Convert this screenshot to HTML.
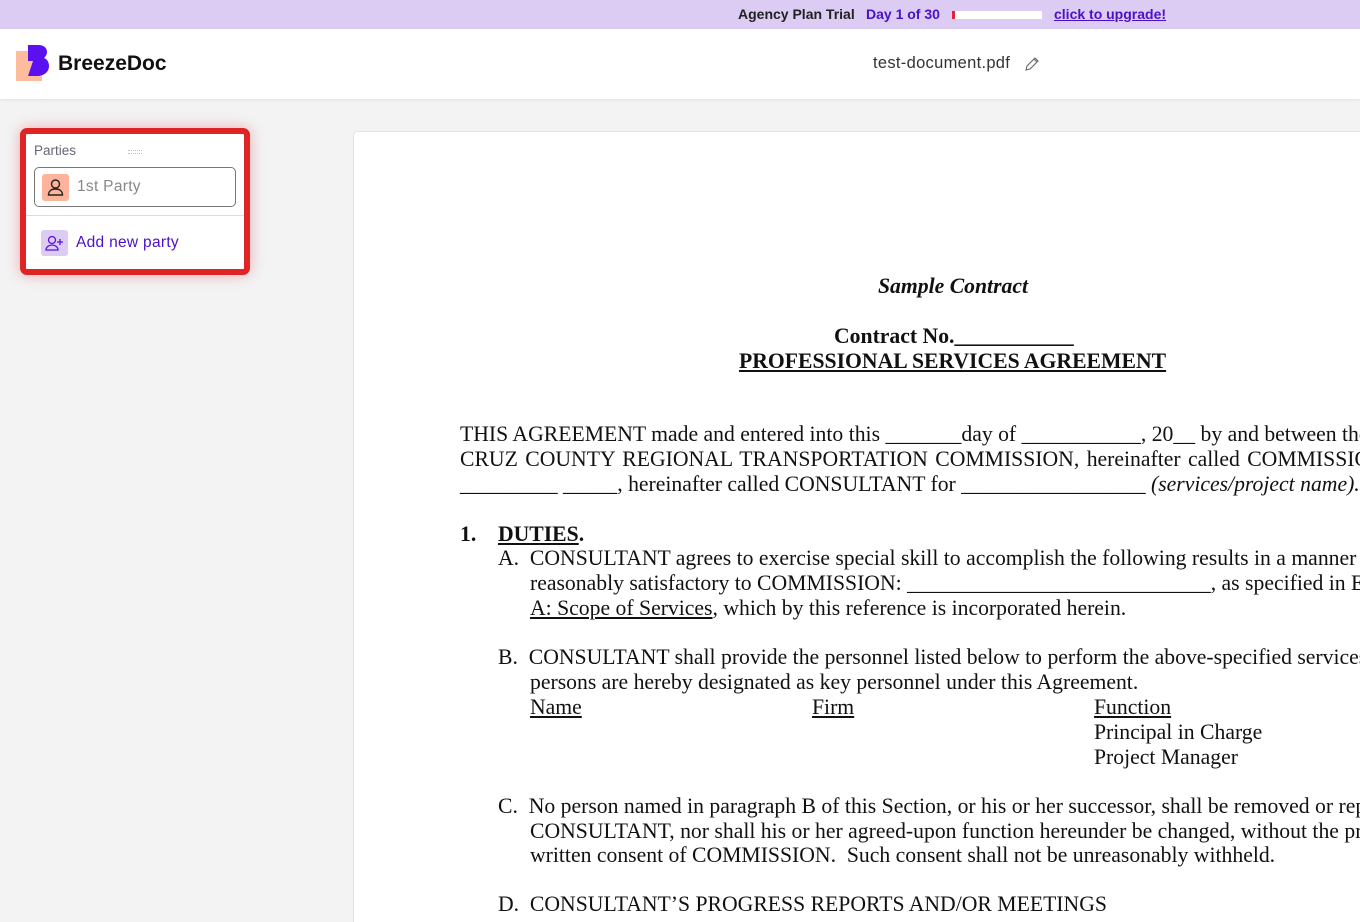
<!DOCTYPE html>
<html style="overflow:hidden"><head><style>
*{margin:0;padding:0;box-sizing:border-box}
html,body{width:1360px;height:922px;overflow:hidden}
body{background:#f3f3f4;font-family:"Liberation Sans",sans-serif;position:relative}
.top{position:absolute;left:0;top:0;width:1360px;height:29px;background:#dccbf3;font-size:14px;font-weight:bold}
.top span{position:absolute;top:6px}
.hdr{position:absolute;left:0;top:29px;width:1360px;height:70px;background:#fff;box-shadow:0 1px 3px rgba(0,0,0,.08)}
.panel{position:absolute;left:20px;top:128px;width:230px;height:147px;border:6px solid #de2424;border-radius:7px;background:#fff;box-shadow:0 0 14px rgba(222,36,36,.35)}
.doc{position:absolute;left:353px;top:131px;width:1007px;height:791px;background:#fff;border:1px solid #e4e4e4;border-right:none;border-bottom:none;border-radius:4px 0 0 0;overflow:hidden}
.t{position:absolute;font-family:"Liberation Serif",serif;font-size:21.7px;line-height:24px;white-space:nowrap;color:#111}
u{text-decoration:underline}
</style></head><body>
<div class="top">
<span style="left:738px;color:#222">Agency Plan Trial</span>
<span style="left:866px;color:#4b10c8">Day 1 of 30</span>
<div style="position:absolute;left:952px;top:11px;width:90px;height:8px;background:#fff"><div style="width:3px;height:8px;background:#e0243a"></div></div>
<span style="left:1054px;color:#4b10c8;text-decoration:underline">click to upgrade!</span>
</div>
<div class="hdr">
<div style="position:absolute;left:16px;top:22px;width:26px;height:30px;background:#fdbd9c"></div>
<svg style="position:absolute;left:24px;top:16px" width="26" height="32" viewBox="0 0 26 32"><path d="M4 0h10c6 0 9 3 9 7 0 3-2 5-3 6 3 1 5 4 5 8 0 6-5 10-12 10H4l5-15H4z" fill="#5b10f0"/></svg>
<div style="position:absolute;left:58px;top:23px;font-size:21px;font-weight:bold;color:#111">BreezeDoc</div>
<div style="position:absolute;left:873px;top:25px;font-size:16.5px;color:#333;letter-spacing:0.3px">test-document.pdf</div>
<svg style="position:absolute;left:1024px;top:27px" width="16" height="16" viewBox="0 0 16 16"><path d="M2 14l1-4 8-8 3 3-8 8zM10 3l3 3" fill="none" stroke="#666" stroke-width="1.1"/></svg>
</div>
<div class="panel">
<div style="position:absolute;left:8px;top:9px;font-size:13.5px;color:#667">Parties</div>
<div style="position:absolute;left:102px;top:16px;width:14px;height:4px;border-top:1px dotted #bbb;border-bottom:1px dotted #bbb"></div>
<div style="position:absolute;left:8px;top:33px;width:202px;height:40px;border:1px solid #777;border-radius:5px">
<div style="position:absolute;left:7px;top:6px;width:27px;height:27px;background:#fdb49a;border-radius:3px"><svg width="27" height="27" viewBox="0 0 27 27"><circle cx="13.5" cy="10" r="4" fill="none" stroke="#222" stroke-width="1.4"/><path d="M6.5 21c0-4 3-6 7-6s7 2 7 6z" fill="none" stroke="#222" stroke-width="1.4"/></svg></div>
<div style="position:absolute;left:42px;top:10px;font-size:15.5px;color:#888;letter-spacing:0.3px">1st Party</div>
</div>
<div style="position:absolute;left:0;top:81px;width:218px;border-top:1px solid #ddd"></div>
<div style="position:absolute;left:15px;top:96px;width:27px;height:26px;background:#dccbf3;border-radius:3px"><svg width="27" height="26" viewBox="0 0 27 26"><circle cx="11" cy="10" r="3.5" fill="none" stroke="#5b10e0" stroke-width="1.3"/><path d="M5 20c0-3 3-5 6-5s6 2 6 5z M19 9v6M16 12h6" fill="none" stroke="#5b10e0" stroke-width="1.3"/></svg></div>
<div style="position:absolute;left:50px;top:100px;font-size:15.5px;color:#4b10c8;letter-spacing:0.3px">Add new party</div>
</div>
<div class="doc"><div style="position:absolute;left:-354px;top:-132px;width:1360px;height:922px">
<div class="t" style="left:878px;top:274px;font-weight:bold;font-style:italic">Sample Contract</div>
<div class="t" style="left:834px;top:324px;font-weight:bold">Contract No.___________</div>
<div class="t" style="left:739px;top:349px;font-weight:bold"><u>PROFESSIONAL SERVICES AGREEMENT</u></div>
<div class="t" style="left:460px;top:422px">THIS AGREEMENT made and entered into this _______day of ___________, 20__ by and between the SANTA</div>
<div class="t" style="left:460px;top:447px;word-spacing:2px">CRUZ COUNTY REGIONAL TRANSPORTATION COMMISSION, hereinafter called COMMISSION, and</div>
<div class="t" style="left:460px;top:472px">_________ _____, hereinafter called CONSULTANT for _________________ <i>(services/project name).</i></div>
<div class="t" style="left:460px;top:522px;font-weight:bold">1.&nbsp;&nbsp;&nbsp;&nbsp;<u>DUTIES</u>.</div>
<div class="t" style="left:498px;top:546px">A.&nbsp;&nbsp;CONSULTANT agrees to exercise special skill to accomplish the following results in a manner</div>
<div class="t" style="left:530px;top:571px">reasonably satisfactory to COMMISSION: ____________________________, as specified in Exhibit</div>
<div class="t" style="left:530px;top:596px"><u>A: Scope of Services</u>, which by this reference is incorporated herein.</div>
<div class="t" style="left:498px;top:645px">B.&nbsp;&nbsp;CONSULTANT shall provide the personnel listed below to perform the above-specified services, which</div>
<div class="t" style="left:530px;top:670px">persons are hereby designated as key personnel under this Agreement.</div>
<div class="t" style="left:530px;top:695px"><u>Name</u></div>
<div class="t" style="left:812px;top:695px"><u>Firm</u></div>
<div class="t" style="left:1094px;top:695px"><u>Function</u></div>
<div class="t" style="left:1094px;top:720px">Principal in Charge</div>
<div class="t" style="left:1094px;top:745px">Project Manager</div>
<div class="t" style="left:498px;top:794px">C.&nbsp;&nbsp;No person named in paragraph B of this Section, or his or her successor, shall be removed or replaced by</div>
<div class="t" style="left:530px;top:819px">CONSULTANT, nor shall his or her agreed-upon function hereunder be changed, without the prior</div>
<div class="t" style="left:530px;top:843px">written consent of COMMISSION.&nbsp; Such consent shall not be unreasonably withheld.</div>
<div class="t" style="left:498px;top:892px">D.&nbsp;&nbsp;CONSULTANT’S PROGRESS REPORTS AND/OR MEETINGS</div>
</div></div>
</body></html>
